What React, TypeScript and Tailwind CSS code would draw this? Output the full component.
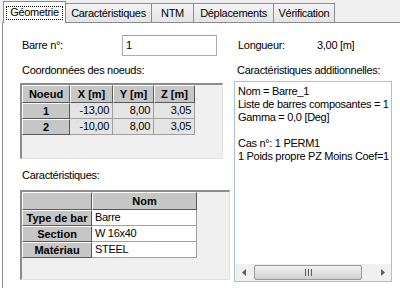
import React from 'react';

const tabs = [
  { label: 'Géometrie', w: 'w-[63px]', active: true },
  { label: 'Caractéristiques', w: 'w-[87px]', active: false },
  { label: 'NTM', w: 'w-[43px]', active: false },
  { label: 'Déplacements', w: 'w-[81px]', active: false },
  { label: 'Vérification', w: 'w-[62px]', active: false },
];

const nodes = [
  { id: '1', x: '-13,00', y: '8,00', z: '3,05' },
  { id: '2', x: '-10,00', y: '8,00', z: '3,05' },
];

// the first name is cut by the column in the original grid
const props = [
  { name: 'Type de bar', value: 'Barre' },
  { name: 'Section', value: 'W 16x40' },
  { name: 'Matériau', value: 'STEEL' },
];

const HeadCell = ({ children, className = '' }: { children?: React.ReactNode; className?: string }) => (
  <div
    className={`flex items-center justify-center overflow-hidden whitespace-nowrap bg-[#c6c6c6] font-bold tracking-normal border border-t-white border-l-white border-r-[#5a5a5a] border-b-[#5a5a5a] ${className}`}
  >
    {children}
  </div>
);

const DataCell = ({ children, className = '' }: { children?: React.ReactNode; className?: string }) => (
  <div className={`flex items-center overflow-hidden whitespace-nowrap border-r border-b border-[#a0a0a0] ${className}`}>
    {children}
  </div>
);

const gridBox =
  'bg-[#f0f0f0] border-t-2 border-l-2 border-r border-b border-t-[#8c8c8c] border-l-[#8c8c8c] border-r-[#e3e3e3] border-b-[#e3e3e3]';

export default function App() {
  return (
    <div className="w-[400px] h-[288px] overflow-hidden bg-white text-black text-[11px] leading-[13px] tracking-[-0.3px] font-['Liberation_Sans',Arial,sans-serif]">
      {/* tab strip */}
      <div className="flex h-[22px] items-end bg-[#f0f0f0] pl-[3px]">
        {tabs.map((t, i) =>
          t.active ? (
            <div
              key={t.label}
              className={`relative z-10 -mb-px flex h-[22px] ${t.w} items-center justify-center border border-b-0 border-[#898c95] bg-white`}
            >
              <span className="border border-dotted border-black px-[3px] leading-[11px] pb-px">{t.label}</span>
            </div>
          ) : (
            <div
              key={t.label}
              className={`flex h-[19px] ${t.w} ${i > 0 ? '-ml-px' : ''} items-center justify-center border border-b-0 border-[#898c95] bg-gradient-to-b from-[#f4f4f4] to-[#e4e4e4]`}
            >
              {t.label}
            </div>
          )
        )}
      </div>

      {/* page */}
      <div className="ml-[2px] h-[266px] border-l border-t border-[#898c95] bg-white pl-[17px]">
        <div className="mt-[12px] flex h-[21px] items-center">
          <div className="w-[102px] pl-[2px]">Barre n°:</div>
          <div className="flex h-[21px] w-[95px] items-center border border-[#abadb3] border-t-[#9aa0a8] pl-[3px]">1</div>
          <div className="ml-[21px] w-[79px]">Longueur:</div>
          <div>3,00 [m]</div>
        </div>

        <div className="mt-[8px] flex">
          {/* left column */}
          <div className="w-[210px]">
            <div className="pl-[2px]">Coordonnées des noeuds:</div>
            <div className={`mt-[6px] h-[76px] w-[203px] ${gridBox}`}>
              <div className="flex h-[18px]">
                <HeadCell className="w-[48px]">Noeud</HeadCell>
                <HeadCell className="w-[43px]">X [m]</HeadCell>
                <HeadCell className="w-[41px]">Y [m]</HeadCell>
                <HeadCell className="w-[41px]">Z [m]</HeadCell>
              </div>
              {nodes.map((n) => (
                <div key={n.id} className="flex h-[16px]">
                  <HeadCell className="w-[48px]">{n.id}</HeadCell>
                  <DataCell className="w-[43px] justify-end bg-[#e4e4e4] pr-[3px]">{n.x}</DataCell>
                  <DataCell className="w-[41px] justify-end bg-[#e4e4e4] pr-[3px]">{n.y}</DataCell>
                  <DataCell className="w-[41px] justify-end bg-[#e4e4e4] pr-[3px]">{n.z}</DataCell>
                </div>
              ))}
            </div>

            <div className="mt-[10px] pl-[2px]">Caractéristiques:</div>
            <div className={`mt-[8px] h-[90px] w-[210px] ${gridBox}`}>
              <div className="flex h-[18px]">
                <HeadCell className="w-[70px]" />
                <HeadCell className="w-[105px]">Nom</HeadCell>
              </div>
              {props.map((p) => (
                <div key={p.name} className="flex h-[16px]">
                  <HeadCell className="w-[70px] tracking-[0.3px]">{p.name}</HeadCell>
                  <DataCell className="w-[105px] bg-white pl-[3px]">{p.value}</DataCell>
                </div>
              ))}
            </div>
          </div>

          {/* right column */}
          <div className="ml-[4px] w-[158px]">
            <div className="pl-[3px]">Caractéristiques additionnelles:</div>
            <div className="mt-[4px] flex h-[201px] flex-col border border-[#a9c0d9]">
              <div className="flex-1 overflow-hidden whitespace-nowrap pl-[3px] pt-[3px]">
                <div>Nom = Barre_1</div>
                <div>Liste de barres composantes = 1</div>
                <div>Gamma = 0,0 [Deg]</div>
                <div>&nbsp;</div>
                <div>Cas n°: 1 PERM1</div>
                <div>1 Poids propre PZ Moins Coef=1</div>
              </div>
              <div className="flex h-[17px] items-center bg-[#f0f0f0]">
                <div className="flex h-[17px] w-[17px] items-center justify-center">
                  <svg width="4" height="7" viewBox="0 0 4 7">
                    <path d="M4 0 L0 3.5 L4 7 Z" fill="#606060" />
                  </svg>
                </div>
                <div className="ml-[2px] flex h-[15px] w-[108px] items-center justify-center rounded-[2px] border border-[#9a9a9a] bg-gradient-to-b from-[#f2f2f2] via-[#e2e2e2] to-[#cfcfcf]">
                  <svg width="7" height="7" viewBox="0 0 7 7">
                    <path d="M0.5 0 V7 M3.5 0 V7 M6.5 0 V7" stroke="#5a5a5a" strokeWidth="1" />
                  </svg>
                </div>
                <div className="flex-1" />
                <div className="flex h-[17px] w-[17px] items-center justify-center">
                  <svg width="4" height="7" viewBox="0 0 4 7">
                    <path d="M0 0 L4 3.5 L0 7 Z" fill="#606060" />
                  </svg>
                </div>
              </div>
            </div>
          </div>
        </div>
      </div>
    </div>
  );
}
